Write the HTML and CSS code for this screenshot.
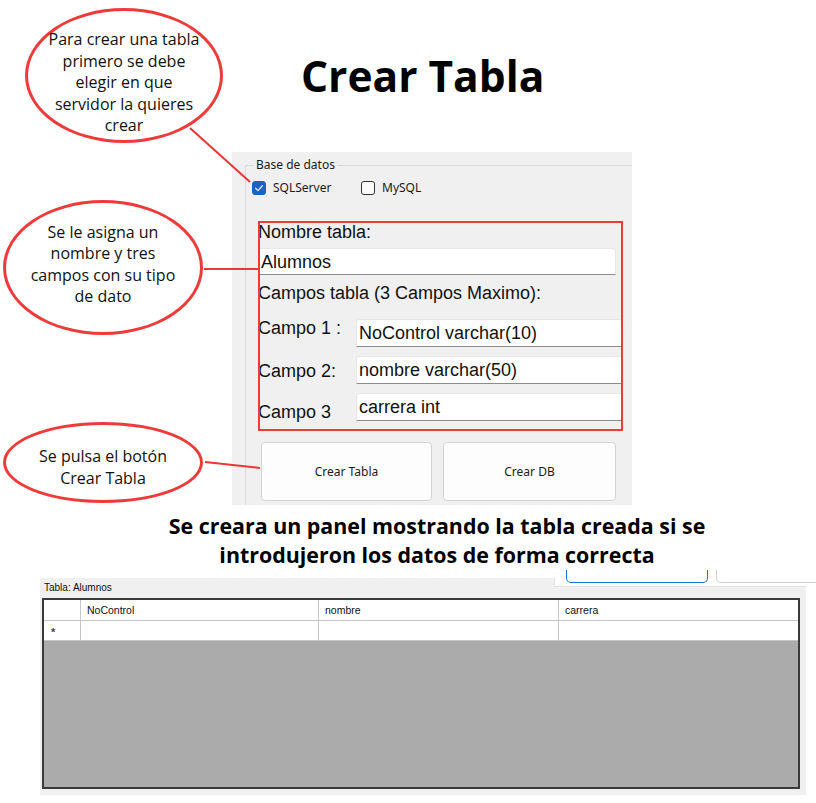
FILE: index.html
```html
<!DOCTYPE html>
<html lang="es">
<head>
<meta charset="utf-8">
<title>Crear Tabla</title>
<link rel="stylesheet" href="styles.css">
</head>
<body>
<div class="poster">
  <h1 class="title">Crear Tabla</h1>

  <div class="bubble bubble-1"><p>Para crear una tabla<br>primero se debe<br>elegir en que<br>servidor la quieres<br>crear</p></div>
  <div class="bubble bubble-2"><p>Se le asigna un<br>nombre y tres<br>campos con su tipo<br>de dato</p></div>
  <div class="bubble bubble-3"><p>Se pulsa el botón<br>Crear Tabla</p></div>

  <section class="app">
    <div class="group">
      <span class="legend">Base de datos</span>
      <div class="checks">
        <label class="check">
          <span class="box box-on"><svg viewBox="0 0 14 14" width="14" height="14"><path d="M3.6 7.3 L6 9.6 L10.4 4.7" fill="none" stroke="#dce8f8" stroke-width="1.3" stroke-linecap="round" stroke-linejoin="round"/></svg></span>
          <span>SQLServer</span>
        </label>
        <label class="check">
          <span class="box"></span>
          <span>MySQL</span>
        </label>
      </div>

      <div class="fields">
        <div class="label label-top">Nombre tabla:</div>
        <div class="input input-name">Alumnos</div>
        <div class="label label-campos">Campos tabla (3 Campos Maximo):</div>
        <div class="rows">
          <div class="label row-label rl-1">Campo 1 :</div>
          <div class="input input-field">NoControl varchar(10)</div>
          <div class="label row-label rl-2">Campo 2:</div>
          <div class="input input-field">nombre varchar(50)</div>
          <div class="label row-label rl-3">Campo 3</div>
          <div class="input input-field">carrera int</div>
        </div>
      </div>

      <div class="buttons">
        <button class="btn btn-1">Crear Tabla</button>
        <button class="btn btn-2">Crear DB</button>
      </div>
    </div>
  </section>

  <p class="subtitle">Se creara un panel mostrando la tabla creada si se<br>introdujeron los datos de forma correcta</p>

  <section class="result">
    <div class="result-head">
      <div class="caption">Tabla: Alumnos</div>
      <div class="tabs">
        <div class="tabs-strip">
          <span class="tab tab-blue"></span>
          <span class="tab tab-gray"></span>
        </div>
      </div>
    </div>
    <div class="grid">
      <div class="cell corner"></div>
      <div class="cell head">NoControl</div>
      <div class="cell head">nombre</div>
      <div class="cell head">carrera</div>
      <div class="cell rowhead">*</div>
      <div class="cell"></div>
      <div class="cell"></div>
      <div class="cell"></div>
    </div>
  </section>

  <svg class="connectors" width="816" height="803" viewBox="0 0 816 803">
    <line x1="190" y1="128" x2="250" y2="182"/>
    <line x1="204" y1="269" x2="258" y2="269"/>
    <line x1="205" y1="462" x2="260" y2="468"/>
  </svg>
</div>
</body>
</html>
```

FILE: styles.css
```css
* { box-sizing: border-box; }

html, body {
  margin: 0;
  padding: 0;
  background: #ffffff;
}

.poster {
  position: relative;
  width: 816px;
  height: 803px;
  overflow: hidden;
  font-family: "Open Sans", "Noto Sans", sans-serif;
  color: #000;
}

/* ---------- headings ---------- */
.title {
  position: absolute;
  left: 301px;
  top: 47px;
  margin: 0;
  font-family: "Open Sans", sans-serif;
  font-weight: 700;
  font-size: 42.5px;
  line-height: normal;
  color: #000;
}

.subtitle {
  position: absolute;
  left: 137px;
  top: 511px;
  width: 600px;
  margin: 0;
  text-align: center;
  font-family: "Open Sans", sans-serif;
  font-weight: 700;
  font-size: 21.4px;
  line-height: 29px;
  color: #000;
}

/* ---------- speech bubbles ---------- */
.bubble {
  position: absolute;
  display: flex;
  align-items: center;
  justify-content: center;
  border: 3px solid #ef3a3a;
  border-radius: 50%;
  background: #fff;
  text-align: center;
}
.bubble p {
  margin: 0;
  font-family: "Open Sans", sans-serif;
  font-size: 16px;
  line-height: 21.5px;
  color: #111;
}
.bubble-1 { left: 25px; top: 8px; width: 198px; height: 135px; padding-top: 15px; }
.bubble-2 { left: 3px; top: 200px; width: 200px; height: 135px; padding-bottom: 6px; }
.bubble-3 { left: 3px; top: 422px; width: 200px; height: 81px; padding-top: 10px; }

.connectors {
  position: absolute;
  left: 0;
  top: 0;
  pointer-events: none;
}
.connectors line {
  stroke: #ee3535;
  stroke-width: 2;
}

/* ---------- form screenshot ---------- */
.app {
  position: absolute;
  left: 232px;
  top: 152px;
  width: 400px;
  height: 353px;
  background: #f0f0f0;
  overflow: hidden;
}

.group {
  position: relative;
  margin: 13px 0 0 13px;
  width: 420px;
  height: 380px;
  border: 1px solid #d9d9d9;
}

.legend {
  position: absolute;
  left: 8px;
  top: -9px;
  padding: 0 2px;
  background: #f0f0f0;
  font-family: "Noto Sans", sans-serif;
  font-size: 12px;
  line-height: 16px;
  color: #1a1a1a;
}

.checks {
  display: grid;
  grid-template-columns: 109px auto;
  margin: 15px 0 0 6px;
  height: 14px;
}
.check {
  display: flex;
  align-items: center;
  gap: 7px;
  font-family: "Noto Sans", sans-serif;
  font-size: 12px;
  line-height: 14px;
  color: #1a1a1a;
}
.box {
  display: block;
  width: 14px;
  height: 14px;
  border: 1px solid #333;
  border-radius: 3px;
  background: #fafafa;
}
.box-on {
  border-color: #1a62c4;
  background: #1a62c4;
}
.box-on svg {
  display: block;
  margin: -1px 0 0 -1px;
}

.fields {
  position: relative;
  margin: 26px 0 0 12px;
  width: 365px;
  height: 210px;
  font-family: "Liberation Sans", Arial, sans-serif;
  font-size: 18px;
  color: #111;
}
.fields::after {
  content: "";
  position: absolute;
  inset: 0;
  border: 2px solid #ef3a3a;
  pointer-events: none;
}

.label {
  line-height: 22px;
  white-space: nowrap;
}
.label-top { margin-bottom: 5px; }
.label-campos { margin-top: 7px; }

.input {
  height: 27px;
  background: #fff;
  border: 1px solid #e6e6e6;
  border-bottom: 1px solid #8c8c8c;
  border-radius: 3px 3px 0 0;
  padding: 1px 0 0 2px;
  line-height: 24px;
  white-space: nowrap;
  overflow: hidden;
}
.input-name { width: 358px; }

.rows {
  display: grid;
  grid-template-columns: 98px 1fr;
  grid-auto-rows: 28px;
  row-gap: 9px;
  margin-top: 15px;
}
.row-label { align-self: start; }
.rl-1 { margin-top: -2px; }
.rl-2 { margin-top: 4px; }
.rl-3 { margin-top: 8px; }
.input-field {
  height: 28px;
  line-height: 26px;
  padding-top: 0;
  padding-left: 2px;
}

.buttons {
  display: flex;
  gap: 11px;
  margin: 11px 0 0 15px;
}
.btn {
  height: 59px;
  margin: 0;
  padding: 0;
  background: #fdfdfd;
  border: 1px solid #d3d3d3;
  border-radius: 4px;
  font-family: "Noto Sans", sans-serif;
  font-size: 12px;
  color: #1a1a1a;
}
.btn-1 { width: 171px; }
.btn-2 { width: 173px; }

/* ---------- result panel ---------- */
.result {
  position: absolute;
  left: 40px;
  top: 578px;
  width: 766px;
  height: 217px;
  background: #f0f0f0;
  display: flex;
  flex-direction: column;
  font-family: "Liberation Sans", Arial, sans-serif;
  color: #111;
}

.result-head {
  display: flex;
  height: 20px;
}
.caption {
  flex: 1;
  padding-left: 4px;
  font-size: 10px;
  line-height: 20px;
  white-space: nowrap;
}
.tabs {
  width: 252px;
}
.tabs-strip {
  position: relative;
  height: 9px;
  background: #fff;
  border-left: 1px solid #e2e2e2;
  border-bottom: 1px solid #e2e2e2;
}
.tab {
  position: absolute;
  top: -8px;
  height: 13px;
  border-radius: 0 0 5px 5px;
}
.tab-blue {
  left: 11px;
  width: 142px;
  border: 1.5px solid #1f6fd1;
  border-top: none;
}
.tab-gray {
  left: 161px;
  width: 120px;
  border: 1px solid #d0d0d0;
  border-top: none;
}

.grid {
  display: grid;
  grid-template-columns: 37px 238px 240px 1fr;
  grid-template-rows: 21px 20px;
  align-content: start;
  margin-left: 2px;
  width: 758px;
  height: 191px;
  border: 2px solid #3a3a3a;
  background: #ababab;
}
.cell {
  background: #fff;
  border-right: 1px solid #c6c6c6;
  border-bottom: 1px solid #c6c6c6;
  font-size: 10.5px;
  line-height: 20px;
  white-space: nowrap;
}
.cell:nth-child(4n) { border-right: none; }
.head { padding-left: 6px; }
.rowhead {
  padding-left: 7px;
  font-size: 11px;
  font-weight: 700;
  color: #444;
  line-height: 22px;
}
```
